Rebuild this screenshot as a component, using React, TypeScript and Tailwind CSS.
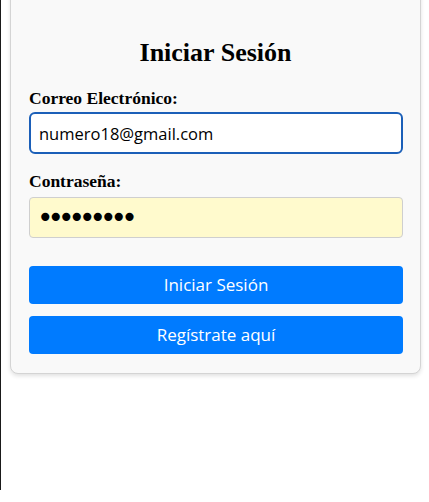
import React, { useState } from 'react';

export default function App() {
  const [email, setEmail] = useState('numero18@gmail.com');
  const [password, setPassword] = useState('123456789');

  return (
    <div className="h-[502px] w-full border-l border-[#1a1a1a] bg-white">
      <div className="ml-[9px] mt-[-12px] w-[411px] rounded-lg border border-[#d4d4d4] bg-[#f9f9f9] px-[18px] pb-[19px] pt-[49px] shadow-[0_2px_4px_rgba(0,0,0,0.12)]">
        <h2 className="text-center font-['Liberation_Serif',serif] text-[26px] font-bold leading-[30px] text-black">
          Iniciar Sesión
        </h2>

        <form className="mt-[20px]" onSubmit={(e) => e.preventDefault()}>
          <label className="block font-['Liberation_Serif',serif] text-[17.5px] font-bold leading-[20px] text-black">
            Correo Electrónico:
          </label>
          <input
            type="email"
            value={email}
            autoFocus
            onChange={(e) => setEmail(e.target.value)}
            className="mt-[4px] block h-[42px] w-[374px] rounded-[6px] border-2 border-[#1b5fb8] bg-white px-[8px] font-['Open_Sans',sans-serif] text-[16.5px] text-black caret-black outline-none"
          />

          <label className="mt-[17px] block font-['Liberation_Serif',serif] text-[17.5px] font-bold leading-[20px] text-black">
            Contraseña:
          </label>
          <input
            type="password"
            value={password}
            onChange={(e) => setPassword(e.target.value)}
            className="mt-[6px] block h-[41px] w-[374px] rounded-[4px] border border-[#cfcfcf] bg-[#fffacd] px-[7px] font-['DejaVu_Sans',sans-serif] text-[28px] tracking-[-6px] text-black outline-none"
          />

          <div className="mt-[28px] flex flex-col gap-[12px]">
            <button
              type="submit"
              className="h-[38px] w-[374px] rounded-[4px] bg-[#007bff] font-['Open_Sans',sans-serif] text-[17px] text-white"
            >
              Iniciar Sesión
            </button>
            <button
              type="button"
              className="h-[38px] w-[374px] rounded-[4px] bg-[#007bff] font-['Open_Sans',sans-serif] text-[17px] text-white"
            >
              Regístrate aquí
            </button>
          </div>
        </form>
      </div>
    </div>
  );
}
